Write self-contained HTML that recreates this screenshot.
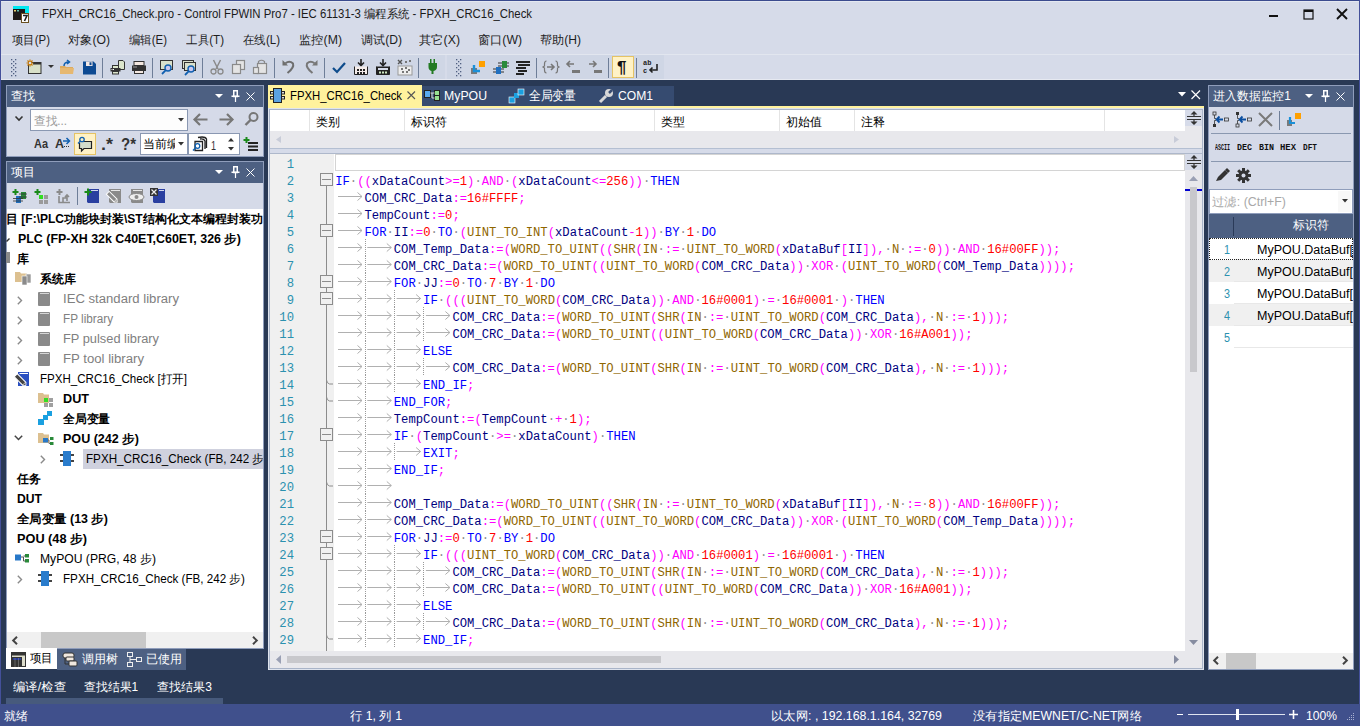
<!DOCTYPE html>
<html><head><meta charset="utf-8">
<style>
*{box-sizing:border-box;margin:0;padding:0}
html,body{width:1360px;height:726px;overflow:hidden}
body{background:#293955;font-family:"Liberation Sans",sans-serif;font-size:12px;color:#000;position:relative}
.a{position:absolute}
.t{position:absolute;white-space:pre;line-height:1;transform-origin:0 0}
.c{position:absolute;left:336px;white-space:pre;font-family:"Liberation Mono",monospace;font-size:12.21px;line-height:17px;color:#000080}
.k{color:#0000ff}.o{color:#ff00ff}.n{color:#ff0000}.f{color:#8f6600}.w{color:#8c8c8c}
.ln{position:absolute;width:40px;left:254px;text-align:right;font-family:"Liberation Mono",monospace;font-size:12.22px;line-height:17px;color:#2b91af}
svg{position:absolute;overflow:visible}
</style></head><body>

<div class="a" style="left:0px;top:0px;width:1360px;height:80px;background:#d6dbe9;"></div>
<div class="a" style="left:0px;top:0px;width:1360px;height:1px;background:#3b4b8e;"></div>
<div class="a" style="left:0px;top:0px;width:1px;height:726px;background:#44509a;"></div>
<div class="a" style="left:1359px;top:0px;width:1px;height:726px;background:#44509a;"></div>
<div class="a" style="left:1px;top:1px;width:1358px;height:1px;background:#e4e8f1;"></div>
<svg style="left:12px;top:5px" width="18" height="18" viewBox="0 0 18 18"><path d="M1 1 H17 V8 H13 V4 H1 Z" fill="#00e8f0"/><path d="M1 4 H13 V15 H1 Z" fill="#1e1a1a"/><rect x="2" y="5" width="2" height="1.5" fill="#e8d070"/><rect x="5" y="5" width="2" height="1.5" fill="#60c0b0"/><rect x="9.5" y="8.5" width="7" height="9" fill="#fff" stroke="#6a5020"/><path d="M11 10.5 H15 L12.5 16" stroke="#222" stroke-width="1.6" fill="none"/></svg>
<div class="t" style="left:42px;top:8px;color:#1a1a1a;transform:scaleX(0.9473);">FPXH_CRC16_Check.pro - Control FPWIN Pro7 - IEC 61131-3 编程系统 - FPXH_CRC16_Check</div>
<div class="a" style="left:1269px;top:15px;width:9px;height:2px;background:#111;"></div>
<svg style="left:1303px;top:9px" width="12" height="12" viewBox="0 0 12 12"><rect x="1" y="1" width="9" height="9" fill="none" stroke="#111" stroke-width="1.2"/><rect x="1" y="1" width="9" height="2" fill="#111"/></svg>
<svg style="left:1336px;top:8px" width="12" height="12" viewBox="0 0 12 12"><path d="M1 1 L11 11 M11 1 L1 11" stroke="#111" stroke-width="1.9"/></svg>
<div class="t" style="left:12px;top:34px;color:#1e1e1e;transform:scaleX(0.9500);">项目(P)</div>
<div class="t" style="left:68px;top:34px;color:#1e1e1e;transform:scaleX(1.0163);">对象(O)</div>
<div class="t" style="left:129px;top:34px;color:#1e1e1e;transform:scaleX(0.9500);">编辑(E)</div>
<div class="t" style="left:186px;top:34px;color:#1e1e1e;transform:scaleX(0.9662);">工具(T)</div>
<div class="t" style="left:243px;top:34px;color:#1e1e1e;transform:scaleX(0.9568);">在线(L)</div>
<div class="t" style="left:299px;top:34px;color:#1e1e1e;transform:scaleX(1.0238);">监控(M)</div>
<div class="t" style="left:361px;top:34px;color:#1e1e1e;transform:scaleX(1.0081);">调试(D)</div>
<div class="t" style="left:419px;top:34px;color:#1e1e1e;transform:scaleX(1.0250);">其它(X)</div>
<div class="t" style="left:478px;top:34px;color:#1e1e1e;transform:scaleX(1.0155);">窗口(W)</div>
<div class="t" style="left:540px;top:34px;color:#1e1e1e;transform:scaleX(1.0081);">帮助(H)</div>
<div class="a" style="left:1px;top:54px;width:1358px;height:1px;background:#e2e6ef;"></div>
<div class="a" style="left:2px;top:55px;width:443px;height:24px;background:#cfd6e5;"></div>
<div class="a" style="left:447px;top:55px;width:217px;height:24px;background:#cfd6e5;"></div>
<div class="a" style="left:1px;top:79px;width:1358px;height:1px;background:#e6e9f1;"></div>
<svg style="left:11px;top:59px" width="6" height="18" fill="#4f5f80"><rect x="0" y="0" width="1.3" height="1.3"/><rect x="4" y="0" width="1.3" height="1.3"/><rect x="2" y="2" width="1.3" height="1.3"/><rect x="0" y="4" width="1.3" height="1.3"/><rect x="4" y="4" width="1.3" height="1.3"/><rect x="2" y="6" width="1.3" height="1.3"/><rect x="0" y="8" width="1.3" height="1.3"/><rect x="4" y="8" width="1.3" height="1.3"/><rect x="2" y="10" width="1.3" height="1.3"/><rect x="0" y="12" width="1.3" height="1.3"/><rect x="4" y="12" width="1.3" height="1.3"/><rect x="2" y="14" width="1.3" height="1.3"/><rect x="0" y="16" width="1.3" height="1.3"/><rect x="4" y="16" width="1.3" height="1.3"/></svg>
<svg style="left:456px;top:59px" width="6" height="18" fill="#4f5f80"><rect x="0" y="0" width="1.3" height="1.3"/><rect x="4" y="0" width="1.3" height="1.3"/><rect x="2" y="2" width="1.3" height="1.3"/><rect x="0" y="4" width="1.3" height="1.3"/><rect x="4" y="4" width="1.3" height="1.3"/><rect x="2" y="6" width="1.3" height="1.3"/><rect x="0" y="8" width="1.3" height="1.3"/><rect x="4" y="8" width="1.3" height="1.3"/><rect x="2" y="10" width="1.3" height="1.3"/><rect x="0" y="12" width="1.3" height="1.3"/><rect x="4" y="12" width="1.3" height="1.3"/><rect x="2" y="14" width="1.3" height="1.3"/><rect x="0" y="16" width="1.3" height="1.3"/><rect x="4" y="16" width="1.3" height="1.3"/></svg>
<svg style="left:26px;top:59px" width="16" height="16" viewBox="0 0 16 16"><rect x="2.5" y="3.5" width="12.5" height="11" fill="#d8e0c8" stroke="#333"/><rect x="7" y="3" width="8" height="2.5" fill="#333"/><path d="M4 0.5 V7.5 M0.5 4 H7.5 M1.5 1.5 L6.5 6.5 M6.5 1.5 L1.5 6.5" stroke="#c87800" stroke-width="1.2"/><circle cx="4" cy="4" r="1.3" fill="#d6dbe9"/></svg>
<svg style="left:47px;top:64px" width="8" height="6" viewBox="0 0 8 6"><path d="M1 1 H7 L4 4 Z" fill="#333"/></svg>
<svg style="left:59px;top:60px" width="16" height="16" viewBox="0 0 16 16"><path d="M1 6 H6 L7 7 H14 V14 H1 Z" fill="#dcab60"/><path d="M1 8 H15 L14 14 H1 Z" fill="#e6b870"/><path d="M5 6 C5 3 7 2 10 2 M8 0 L10.5 2 L8 4" stroke="#1060b0" stroke-width="1.5" fill="none"/></svg>
<svg style="left:82px;top:60px" width="16" height="16" viewBox="0 0 16 16"><path d="M1 1.5 H11.5 L14 4 V14.5 H1 Z" fill="#0d4a92"/><rect x="4" y="1.5" width="6.5" height="4.5" fill="#f4e8e4"/><rect x="7.5" y="2.3" width="2" height="2.8" fill="#0d4a92"/></svg>
<div class="a" style="left:102px;top:58px;width:1px;height:20px;background:#6e7e98;"></div>
<svg style="left:110px;top:59px" width="16" height="16" viewBox="0 0 16 16"><path d="M8.5 1.5 H13 L14.5 3 V10.5 H8.5 Z" fill="#dce6cc" stroke="#333"/><rect x="2.5" y="6.5" width="6" height="3" fill="#dce6cc" stroke="#333"/><rect x="0.5" y="9" width="10" height="3.5" fill="#333"/><rect x="1.5" y="10" width="1" height="1" fill="#fff"/><rect x="3" y="10" width="1" height="1" fill="#fff"/><rect x="2.5" y="12.5" width="6" height="2.5" fill="#dce6cc" stroke="#333"/></svg>
<svg style="left:131px;top:60px" width="16" height="16" viewBox="0 0 16 16"><rect x="3" y="1.5" width="10" height="4" fill="#f4e8e0" stroke="#333"/><rect x="1" y="5.5" width="14" height="5.5" fill="#333"/><rect x="2.5" y="6.5" width="1" height="1" fill="#fff"/><rect x="4.5" y="6.5" width="1" height="1" fill="#fff"/><rect x="3.5" y="10.5" width="9" height="3" fill="#f4e8e0" stroke="#333"/></svg>
<div class="a" style="left:152px;top:58px;width:1px;height:20px;background:#6e7e98;"></div>
<svg style="left:159px;top:59px" width="16" height="16" viewBox="0 0 16 16"><rect x="1.5" y="1.5" width="12" height="9" fill="#d8e0cc" stroke="#333"/><circle cx="9" cy="9" r="3" fill="#c8c8f0" stroke="#1060b0" stroke-width="1.4"/><path d="M6.8 11.2 L3 15" stroke="#1060b0" stroke-width="1.8"/></svg>
<svg style="left:181px;top:59px" width="16" height="16" viewBox="0 0 16 16"><rect x="1.5" y="1.5" width="11" height="8" fill="#d8e0cc" stroke="#333"/><rect x="3.5" y="3.5" width="11" height="8" fill="#d8e0cc" stroke="#333"/><circle cx="10" cy="10" r="3" fill="#c8c8f0" stroke="#1060b0" stroke-width="1.4"/><path d="M7.8 12.2 L4 16" stroke="#1060b0" stroke-width="1.8"/></svg>
<div class="a" style="left:202px;top:58px;width:1px;height:20px;background:#6e7e98;"></div>
<svg style="left:209px;top:59px" width="16" height="16" viewBox="0 0 16 16"><path d="M4.5 1 L9 10 M11.5 1 L7 10" stroke="#8a8a8a" stroke-width="1.5"/><circle cx="4.5" cy="12.5" r="2.5" fill="none" stroke="#8a8a8a" stroke-width="1.3"/><circle cx="11.5" cy="12.5" r="2.5" fill="none" stroke="#8a8a8a" stroke-width="1.3"/></svg>
<svg style="left:231px;top:59px" width="16" height="16" viewBox="0 0 16 16"><rect x="5.5" y="1.5" width="8" height="9" fill="#e4e4e4" stroke="#8a8a8a" stroke-width="1.2"/><rect x="1.5" y="5.5" width="8" height="9" fill="#e4e4e4" stroke="#8a8a8a" stroke-width="1.2"/></svg>
<svg style="left:252px;top:59px" width="16" height="16" viewBox="0 0 16 16"><rect x="5.5" y="4.5" width="9" height="10" fill="#e4e4e4" stroke="#8a8a8a" stroke-width="1.2"/><path d="M6.5 4.5 V2.5 Q9.5 0 12.5 2.5 V4.5" fill="none" stroke="#8a8a8a" stroke-width="1.2"/><rect x="1.5" y="8.5" width="5" height="6" fill="#e4e4e4" stroke="#8a8a8a" stroke-width="1.2"/></svg>
<div class="a" style="left:274px;top:58px;width:1px;height:20px;background:#6e7e98;"></div>
<svg style="left:281px;top:59px" width="16" height="16" viewBox="0 0 16 16"><path d="M1.5 1 V6.5 H7 Z" fill="#6e6e6e"/><path d="M4.5 4.2 Q8.5 1 12 4.5 Q13.5 8.5 6.5 14" stroke="#6e6e6e" stroke-width="2" fill="none"/></svg>
<svg style="left:303px;top:59px" width="16" height="16" viewBox="0 0 16 16"><path d="M14.5 1 V6.5 H9 Z" fill="#777"/><path d="M11.5 4.2 Q7.5 1 4 4.5 Q2.5 8.5 9.5 14" stroke="#777" stroke-width="2" fill="none"/></svg>
<div class="a" style="left:324px;top:58px;width:1px;height:20px;background:#6e7e98;"></div>
<svg style="left:331px;top:59px" width="16" height="16" viewBox="0 0 16 16"><path d="M2 9 L6 13 L14 4" stroke="#0e4c8c" stroke-width="2.2" fill="none"/></svg>
<svg style="left:353px;top:59px" width="16" height="16" viewBox="0 0 16 16"><path d="M8 0 V6 M5 3.5 L8 6.5 L11 3.5" stroke="#222" stroke-width="1.6" fill="none"/><path d="M1.5 7.5 V15.5 H14.5 V7.5" fill="#f4ecea" stroke="#222"/><rect x="4" y="10" width="2" height="2" fill="#222"/><rect x="7" y="10" width="2" height="2" fill="#222"/><rect x="10" y="10" width="2" height="2" fill="#222"/><rect x="4" y="13" width="2" height="2" fill="#222"/><rect x="7" y="13" width="2" height="2" fill="#222"/><rect x="10" y="13" width="2" height="2" fill="#222"/></svg>
<svg style="left:375px;top:59px" width="16" height="16" viewBox="0 0 16 16"><path d="M8 0 V6 M5 3.5 L8 6.5 L11 3.5" stroke="#222" stroke-width="1.6" fill="none"/><path d="M1.5 7.5 V15.5 H14.5 V7.5" fill="#222" stroke="#222"/><rect x="3" y="9" width="10" height="2" fill="#d6dbe9"/><rect x="4" y="12.5" width="2" height="2" fill="#cde8c0"/><rect x="7" y="12.5" width="2" height="2" fill="#cde8c0"/><rect x="10" y="12.5" width="2" height="2" fill="#cde8c0"/></svg>
<svg style="left:397px;top:59px" width="16" height="16" viewBox="0 0 16 16"><rect x="1" y="7" width="14" height="9" fill="#eee" stroke="#999"/><path d="M1 1 L5 5 M5 1 L1 5" stroke="#555" stroke-width="1.4"/><g fill="#777"><rect x="8" y="2" width="2" height="2"/><rect x="12" y="1" width="2" height="2"/><rect x="4" y="9" width="2" height="2"/><rect x="8" y="8" width="2" height="2"/><rect x="11" y="10" width="2" height="2"/><rect x="5" y="12" width="2" height="2"/><rect x="9" y="12" width="2" height="2"/></g></svg>
<div class="a" style="left:418px;top:58px;width:1px;height:20px;background:#6e7e98;"></div>
<svg style="left:428px;top:59px" width="10" height="16" viewBox="0 0 10 16"><rect x="2" y="0" width="1.5" height="4" fill="#237a23"/><rect x="5.5" y="0" width="1.5" height="4" fill="#237a23"/><path d="M0.5 4 H9 V8 Q9 11 5.5 12 V15 H3.5 V12 Q0.5 11 0.5 8 Z" fill="#237a23"/></svg>
<svg style="left:470px;top:60px" width="16" height="16" viewBox="0 0 16 16"><rect x="1" y="8" width="6" height="6" fill="#7a7a7a"/><path d="M4 5 V11 H10" stroke="#1a90d8" stroke-width="2.4" fill="none"/><rect x="9" y="1" width="6" height="6" fill="#ffa000"/></svg>
<svg style="left:493px;top:59px" width="16" height="16" viewBox="0 0 16 16"><g stroke="#333" stroke-width="1"><path d="M0 10 H11 M0 13 H11 M5 4 H16 M5 7 H16"/></g><rect x="3" y="8" width="5" height="7" fill="#1f6fc0"/><rect x="9" y="2" width="5" height="7" fill="#2a8a3a"/></svg>
<svg style="left:515px;top:60px" width="16" height="16" viewBox="0 0 16 16"><g fill="#222"><rect x="1" y="1" width="14" height="2"/><rect x="3" y="4" width="12" height="2"/><rect x="1" y="7" width="10" height="2"/><rect x="3" y="10" width="9" height="2"/><rect x="1" y="13" width="8" height="2"/></g></svg>
<div class="a" style="left:536px;top:58px;width:1px;height:20px;background:#6e7e98;"></div>
<svg style="left:543px;top:59px" width="16" height="16" viewBox="0 0 16 16"><path d="M3.5 2 Q1.5 2 1.5 5 V7 L0 8 L1.5 9 V11 Q1.5 14 3.5 14 M12.5 2 Q14.5 2 14.5 5 V7 L16 8 L14.5 9 V11 Q14.5 14 12.5 14" stroke="#777" stroke-width="1.2" fill="none"/><path d="M4 8 H11 M8 5 L11 8 L8 11" stroke="#777" stroke-width="1.6" fill="none"/></svg>
<svg style="left:566px;top:59px" width="14" height="16" viewBox="0 0 14 16"><path d="M1 5 H8 M4 2 L1 5 L4 8" stroke="#777" stroke-width="1.6" fill="none"/><rect x="6" y="11" width="8" height="3" fill="#777"/></svg>
<svg style="left:588px;top:59px" width="14" height="16" viewBox="0 0 14 16"><path d="M1 5 H8 M5 2 L8 5 L5 8" stroke="#777" stroke-width="1.6" fill="none"/><rect x="6" y="11" width="8" height="3" fill="#777"/></svg>
<div class="a" style="left:608px;top:58px;width:1px;height:20px;background:#6e7e98;"></div>
<div class="a" style="left:612px;top:56px;width:22px;height:22px;background:#e5c365;"></div>
<div class="a" style="left:613px;top:57px;width:20px;height:20px;background:#fff2c6;"></div>
<div class="t" style="left:617px;top:59px;font-size:17px;font-weight:bold;color:#111">¶</div>
<div class="a" style="left:636px;top:58px;width:1px;height:20px;background:#6e7e98;"></div>
<svg style="left:643px;top:59px" width="16" height="16" viewBox="0 0 16 16"><text x="0" y="6" font-size="7" font-family="Liberation Mono" font-weight="bold" fill="#222">ab</text><text x="0" y="14" font-size="7" font-family="Liberation Mono" font-weight="bold" fill="#222">c</text><path d="M14 5 V11 H7 M9.5 8.5 L7 11 L9.5 13.5" stroke="#222" stroke-width="1.6" fill="none"/></svg>
<div class="a" style="left:6px;top:85px;width:258px;height:72px;background:#8f9dbb;"></div>
<div class="a" style="left:7px;top:86px;width:256px;height:21px;background:#4d6082;"></div>
<div class="t" style="left:11px;top:90px;color:#fff;">查找</div>
<svg style="left:215px;top:94px" width="8" height="5" viewBox="0 0 8 5"><path d="M0 0 H8 L4 4 Z" fill="#fff"/></svg>
<svg style="left:231px;top:90px" width="9" height="12" viewBox="0 0 9 12"><path d="M2.75 0.75 H6.25 V6.5 H2.75 Z" fill="none" stroke="#fff" stroke-width="1.5"/><path d="M0.5 6.25 H8.5" stroke="#fff" stroke-width="1.5"/><path d="M4.5 7 V12" stroke="#fff" stroke-width="1.2"/></svg>
<svg style="left:246px;top:92px" width="9" height="9" viewBox="0 0 9 9"><path d="M0.5 0.5 L8.5 8.5 M8.5 0.5 L0.5 8.5" stroke="#fff" stroke-width="1"/></svg>
<div class="a" style="left:7px;top:107px;width:256px;height:49px;background:#d5dae8;"></div>
<svg style="left:15px;top:116px" width="9" height="6" viewBox="0 0 9 6"><path d="M0.5 0.5 L4 4 L7.5 0.5" stroke="#333" stroke-width="1.6" fill="none"/></svg>
<div class="a" style="left:30px;top:109px;width:158px;height:22px;background:#8a98b2;"></div>
<div class="a" style="left:31px;top:110px;width:156px;height:20px;background:#fdfdfd;"></div>
<div class="t" style="left:34px;top:115px;color:#9a9a9a;transform:scaleX(0.9701);">查找...</div>
<svg style="left:178px;top:118px" width="6" height="4" viewBox="0 0 6 4"><path d="M0 0 H6 L3 3.5 Z" fill="#333"/></svg>
<svg style="left:193px;top:113px" width="15" height="13" viewBox="0 0 15 13"><path d="M14.5 6.5 H2 M7 1 L1.5 6.5 L7 12" stroke="#777" stroke-width="2.2" fill="none"/></svg>
<svg style="left:219px;top:113px" width="15" height="13" viewBox="0 0 15 13"><path d="M0.5 6.5 H13 M8 1 L13.5 6.5 L8 12" stroke="#777" stroke-width="2.2" fill="none"/></svg>
<svg style="left:244px;top:112px" width="15" height="15" viewBox="0 0 15 15"><circle cx="9.5" cy="5" r="4" fill="none" stroke="#777" stroke-width="2"/><path d="M6.5 8 L1.5 13" stroke="#777" stroke-width="2.4"/></svg>
<div class="t" style="left:34px;top:137px;color:#333;font-weight:bold;font-size:13px;transform:scaleX(0.8421);">Aa</div>
<div class="t" style="left:55px;top:137px;color:#333;font-weight:bold;font-size:13px;transform:scaleX(0.9584);">A</div>
<svg style="left:63px;top:137px" width="8" height="10" viewBox="0 0 8 10"><path d="M0 4 H6 M3.5 1 L6.5 4 L3.5 7" stroke="#1060b0" stroke-width="1.5" fill="none"/><rect x="1" y="9" width="1" height="1" fill="#333"/><rect x="3" y="9" width="1" height="1" fill="#333"/><rect x="5" y="9" width="1" height="1" fill="#333"/></svg>
<div class="a" style="left:74px;top:133px;width:22px;height:22px;background:#e5c365;"></div>
<div class="a" style="left:75px;top:134px;width:20px;height:20px;background:#fff2c6;"></div>
<svg style="left:77px;top:136px" width="16" height="16" viewBox="0 0 16 16"><path d="M4.5 5.5 H14.5 V12.5 H7 L4.5 15 V12.5 H2.5 V7" fill="#d3dccb" stroke="#222" stroke-width="1.2"/><circle cx="5" cy="3.5" r="2.2" fill="none" stroke="#1060b0" stroke-width="1.3"/><path d="M3.5 5 L1 7.5" stroke="#1060b0" stroke-width="1.4"/></svg>
<div class="t" style="left:101px;top:137px;color:#333;font-weight:bold;font-size:16px;transform:scaleX(1.1245);">.*</div>
<div class="t" style="left:121px;top:137px;color:#333;font-weight:bold;font-size:16px;transform:scaleX(0.9375);">?*</div>
<div class="a" style="left:140px;top:133px;width:48px;height:22px;background:#8a98b2;"></div>
<div class="a" style="left:141px;top:134px;width:46px;height:20px;background:#fff;"></div>
<div class="a" style="left:141px;top:134px;width:34px;height:20px;overflow:hidden"><div class="t" style="left:2px;top:4px;color:#000;font-size:12px">当前编</div></div>
<svg style="left:178px;top:142px" width="6" height="4" viewBox="0 0 6 4"><path d="M0 0 H6 L3 3.5 Z" fill="#333"/></svg>
<div class="a" style="left:188px;top:133px;width:52px;height:22px;background:#8a98b2;"></div>
<div class="a" style="left:189px;top:134px;width:50px;height:20px;background:#fff;"></div>
<svg style="left:192px;top:136px" width="16" height="16" viewBox="0 0 16 16"><path d="M6 1.5 Q13 0 14.5 3 V12 M8 3 Q12 2.5 13 5 V13 M3 5.5 H10.5 V14.5 H3 Z" stroke="#222" stroke-width="1.3" fill="none"/><circle cx="5.5" cy="10" r="2.3" fill="none" stroke="#1060b0" stroke-width="1.3"/><path d="M4 11.5 L1 14.5" stroke="#1060b0" stroke-width="1.5"/></svg>
<div class="t" style="left:211px;top:139px;color:#333;font-size:13px;transform:scaleX(0.6911);">1</div>
<svg style="left:228px;top:138px" width="6" height="13" viewBox="0 0 6 13"><path d="M0 3.5 L3 0 L6 3.5 Z M0 9 L3 12.5 L6 9 Z" fill="#333"/></svg>
<svg style="left:243px;top:137px" width="15" height="14" viewBox="0 0 15 14"><path d="M0.5 3 H6.5 M3.5 0 V6" stroke="#1a8a1a" stroke-width="2"/><rect x="5" y="5" width="10" height="2" fill="#222"/><rect x="5" y="8.5" width="10" height="2" fill="#222"/><rect x="5" y="12" width="10" height="2" fill="#222"/></svg>
<div class="a" style="left:6px;top:161px;width:258px;height:509px;background:#8f9dbb;"></div>
<div class="a" style="left:7px;top:162px;width:256px;height:21px;background:#4d6082;"></div>
<div class="t" style="left:11px;top:166px;color:#fff;">项目</div>
<svg style="left:215px;top:170px" width="8" height="5" viewBox="0 0 8 5"><path d="M0 0 H8 L4 4 Z" fill="#fff"/></svg>
<svg style="left:231px;top:166px" width="9" height="12" viewBox="0 0 9 12"><path d="M2.75 0.75 H6.25 V6.5 H2.75 Z" fill="none" stroke="#fff" stroke-width="1.5"/><path d="M0.5 6.25 H8.5" stroke="#fff" stroke-width="1.5"/><path d="M4.5 7 V12" stroke="#fff" stroke-width="1.2"/></svg>
<svg style="left:246px;top:168px" width="9" height="9" viewBox="0 0 9 9"><path d="M0.5 0.5 L8.5 8.5 M8.5 0.5 L0.5 8.5" stroke="#fff" stroke-width="1"/></svg>
<div class="a" style="left:7px;top:183px;width:256px;height:26px;background:#d5dae8;"></div>
<div class="a" style="left:7px;top:209px;width:256px;height:423px;background:#ffffff;"></div>
<svg style="left:12px;top:188px" width="16" height="16" viewBox="0 0 16 16"><path d="M0.5 4 H6.5 M3.5 1 V7" stroke="#1a8a1a" stroke-width="2"/><rect x="4" y="8" width="5" height="7" fill="#1f6fc0"/><rect x="9" y="4" width="5" height="7" fill="#2a8a3a"/><path d="M1 10.5 H11 M1 13 H11 M7 6 H15 M7 9 H15" stroke="#333" stroke-width="0.8"/></svg>
<svg style="left:34px;top:188px" width="16" height="16" viewBox="0 0 16 16"><path d="M0.5 4 H6.5 M3.5 1 V7" stroke="#1a8a1a" stroke-width="2"/><rect x="5" y="7" width="4" height="4" fill="#33dd22"/><rect x="10" y="7" width="4" height="4" fill="#9a9a9a"/><rect x="5" y="12" width="4" height="4" fill="#9a9a9a"/><rect x="10" y="12" width="4" height="4" fill="#9a9a9a"/></svg>
<svg style="left:56px;top:188px" width="16" height="16" viewBox="0 0 16 16"><path d="M0.5 4 H6.5 M3.5 1 V7" stroke="#8a8a8a" stroke-width="2"/><path d="M3 8 V14.5 H14 M7 14 V10 H11 M11 7 V13 M9 9 L11 7 L13 9" stroke="#8a8a8a" stroke-width="1.6" fill="none"/></svg>
<div class="a" style="left:77px;top:187px;width:1px;height:18px;background:#6e7e98;"></div>
<svg style="left:84px;top:188px" width="16" height="16" viewBox="0 0 16 16"><path d="M3 1 H15 V15 H4 L3 14 Z" fill="#2a3fa0"/><path d="M7 2.5 H14" stroke="#fff" stroke-width="0.8"/><path d="M0.5 4 H7.5 M4 0.5 V7.5" stroke="#1a8a1a" stroke-width="2"/></svg>
<svg style="left:106px;top:188px" width="16" height="16" viewBox="0 0 16 16"><path d="M3 1 H15 V15 H4 L3 14 Z" fill="#8a8a8a"/><path d="M5 2.5 H14" stroke="#fff" stroke-width="0.8"/><g transform="rotate(45 6 9)"><rect x="0" y="7" width="11" height="4" fill="#8a8a8a" stroke="#fff" stroke-width="1"/><path d="M11 7 L13.5 9 L11 11" fill="#8a8a8a" stroke="#fff" stroke-width="0.8"/></g></svg>
<svg style="left:128px;top:188px" width="16" height="16" viewBox="0 0 16 16"><path d="M3 1 H15 V15 H4 L3 14 Z" fill="#8a8a8a"/><path d="M5 2.5 H14" stroke="#fff" stroke-width="0.8"/><ellipse cx="8.5" cy="9" rx="7.5" ry="3.5" fill="#eee" stroke="#8a8a8a"/><circle cx="8.5" cy="9" r="2" fill="#8a8a8a"/></svg>
<svg style="left:150px;top:188px" width="16" height="16" viewBox="0 0 16 16"><path d="M3 1 H15 V15 H4 L3 14 Z" fill="#2a3fa0"/><path d="M9 2.5 H14" stroke="#fff" stroke-width="0.8"/><rect x="0" y="0" width="8" height="8" fill="#333"/><path d="M1.5 1.5 L6.5 6.5 M6.5 1.5 L1.5 6.5" stroke="#eee" stroke-width="1.2"/></svg>
<div class="a" style="left:0;top:0;width:263px;height:726px;overflow:hidden">
<div class="t" style="left:6px;top:213px;color:#000;font-weight:bold;">目 [F:\PLC功能块封装\ST结构化文本编程封装功</div>
<svg style="left:6px;top:232px" width="5" height="11" viewBox="0 0 5 11"><path d="M0 9 L3 6 L4 7 L1 10 Z" fill="#333"/></svg>
<div class="t" style="left:18px;top:233px;color:#000;font-weight:bold;transform:scaleX(1.0352);">PLC (FP-XH 32k C40ET,C60ET, 326 步)</div>
<div class="a" style="left:6px;top:252px;width:4px;height:11px;background:#8a8a8a;"></div>
<div class="t" style="left:17px;top:253px;color:#000;font-weight:bold;">库</div>
<svg style="left:15px;top:272px" width="18" height="14" viewBox="0 0 18 14"><path d="M0 0 H5 L6 1.5 H12 V10 H0 Z" fill="#dcc090"/><rect x="11" y="2" width="5" height="9" fill="#9a9a9a" stroke="#fff" stroke-width="0.6"/><rect x="7" y="4" width="5" height="9" fill="#8a8a8a" stroke="#fff" stroke-width="0.6"/></svg>
<div class="t" style="left:40px;top:273px;color:#000;font-weight:bold;">系统库</div>
<svg style="left:17px;top:296px" width="6" height="9" viewBox="0 0 6 9"><path d="M0.8 0.8 L4.5 4.5 L0.8 8.2" stroke="#8a8a8a" stroke-width="1.4" fill="none"/></svg>
<svg style="left:38px;top:292px" width="12" height="14" viewBox="0 0 12 14"><rect x="0" y="0" width="12" height="14" rx="1" fill="#8a8a8a"/><path d="M2 1.5 H11" stroke="#e8e8e8" stroke-width="0.8"/></svg>
<div class="t" style="left:63px;top:293px;color:#808080;transform:scaleX(1.0939);">IEC standard library</div>
<svg style="left:17px;top:316px" width="6" height="9" viewBox="0 0 6 9"><path d="M0.8 0.8 L4.5 4.5 L0.8 8.2" stroke="#8a8a8a" stroke-width="1.4" fill="none"/></svg>
<svg style="left:38px;top:312px" width="12" height="14" viewBox="0 0 12 14"><rect x="0" y="0" width="12" height="14" rx="1" fill="#8a8a8a"/><path d="M2 1.5 H11" stroke="#e8e8e8" stroke-width="0.8"/></svg>
<div class="t" style="left:63px;top:313px;color:#808080;transform:scaleX(0.9780);">FP library</div>
<svg style="left:17px;top:336px" width="6" height="9" viewBox="0 0 6 9"><path d="M0.8 0.8 L4.5 4.5 L0.8 8.2" stroke="#8a8a8a" stroke-width="1.4" fill="none"/></svg>
<svg style="left:38px;top:332px" width="12" height="14" viewBox="0 0 12 14"><rect x="0" y="0" width="12" height="14" rx="1" fill="#8a8a8a"/><path d="M2 1.5 H11" stroke="#e8e8e8" stroke-width="0.8"/></svg>
<div class="t" style="left:63px;top:333px;color:#808080;transform:scaleX(1.0687);">FP pulsed library</div>
<svg style="left:17px;top:356px" width="6" height="9" viewBox="0 0 6 9"><path d="M0.8 0.8 L4.5 4.5 L0.8 8.2" stroke="#8a8a8a" stroke-width="1.4" fill="none"/></svg>
<svg style="left:38px;top:352px" width="12" height="14" viewBox="0 0 12 14"><rect x="0" y="0" width="12" height="14" rx="1" fill="#8a8a8a"/><path d="M2 1.5 H11" stroke="#e8e8e8" stroke-width="0.8"/></svg>
<div class="t" style="left:63px;top:353px;color:#808080;transform:scaleX(1.0974);">FP tool library</div>
<svg style="left:14px;top:370px" width="17" height="18" viewBox="0 0 17 18"><path d="M4 2 H15 V16 H4 Z" fill="#2a4fc0"/><path d="M5.5 3.5 H14" stroke="#fff" stroke-width="1"/><g transform="rotate(45 6 9.5)"><rect x="0" y="7.3" width="12" height="4.4" fill="#444" stroke="#fff" stroke-width="1"/><path d="M12 7.3 L14.5 9.5 L12 11.7" fill="#444" stroke="#fff" stroke-width="0.8"/></g></svg>
<div class="t" style="left:40px;top:373px;color:#000;transform:scaleX(0.9626);">FPXH_CRC16_Check [打开]</div>
<svg style="left:38px;top:392px" width="18" height="14" viewBox="0 0 18 14"><path d="M0 1 H5 L6 2.5 H11 V11 H0 Z" fill="#dcc090"/><rect x="6" y="6" width="4" height="4" fill="#33dd22"/><rect x="11" y="6" width="4" height="4" fill="#a0a0a0"/><rect x="6" y="11" width="4" height="4" fill="#a0a0a0"/><rect x="11" y="11" width="4" height="4" fill="#a0a0a0"/></svg>
<div class="t" style="left:63px;top:393px;color:#000;font-weight:bold;transform:scaleX(1.0538);">DUT</div>
<svg style="left:38px;top:411px" width="14" height="14" viewBox="0 0 14 14"><rect x="0" y="8" width="6" height="6" fill="#1aa0e0"/><rect x="5" y="4" width="5" height="5" fill="#1aa0e0"/><rect x="9" y="0" width="5" height="5" fill="#1aa0e0"/></svg>
<div class="t" style="left:63px;top:413px;color:#000;font-weight:bold;transform:scaleX(0.9792);">全局变量</div>
<svg style="left:14px;top:435px" width="9" height="6" viewBox="0 0 9 6"><path d="M0.8 0.8 L4.5 4.5 L8.2 0.8" stroke="#444" stroke-width="1.5" fill="none"/></svg>
<svg style="left:38px;top:432px" width="18" height="14" viewBox="0 0 18 14"><path d="M0 1 H5 L6 2.5 H11 V11 H0 Z" fill="#dcc090"/><rect x="5" y="6" width="5" height="4.5" fill="#2878c8"/><rect x="12" y="5" width="3.5" height="3" fill="#2a8a3a"/><rect x="12" y="10" width="3.5" height="3" fill="#2a8a3a"/><path d="M10 8 H11 V11.5 H12" stroke="#555" stroke-width="0.8" fill="none"/></svg>
<div class="t" style="left:63px;top:433px;color:#000;font-weight:bold;transform:scaleX(1.0456);">POU (242 步)</div>
<div class="a" style="left:83px;top:449px;width:180px;height:20px;background:#cfd1de;"></div>
<svg style="left:40px;top:455px" width="6" height="9" viewBox="0 0 6 9"><path d="M0.8 0.8 L4.5 4.5 L0.8 8.2" stroke="#8a8a8a" stroke-width="1.4" fill="none"/></svg>
<svg style="left:60px;top:451px" width="14" height="15" viewBox="0 0 14 15"><rect x="3" y="0" width="8" height="15" fill="#2a7ccc"/><rect x="0" y="3" width="3" height="2" fill="#444"/><rect x="0" y="9" width="3" height="2" fill="#444"/><rect x="11" y="3" width="3" height="2" fill="#444"/><rect x="11" y="9" width="3" height="2" fill="#444"/></svg>
<div class="t" style="left:86px;top:453px;color:#000;transform:scaleX(0.9712);">FPXH_CRC16_Check (FB, 242 步)</div>
<div class="t" style="left:17px;top:473px;color:#000;font-weight:bold;">任务</div>
<div class="t" style="left:17px;top:493px;color:#000;font-weight:bold;transform:scaleX(1.0133);">DUT</div>
<div class="t" style="left:17px;top:513px;color:#000;font-weight:bold;transform:scaleX(1.0339);">全局变量 (13 步)</div>
<div class="t" style="left:17px;top:533px;color:#000;font-weight:bold;transform:scaleX(1.0604);">POU (48 步)</div>
<svg style="left:15px;top:554px" width="14" height="9" viewBox="0 0 14 9"><rect x="0" y="0.5" width="6" height="6" fill="#2878c8"/><rect x="10" y="0" width="4" height="3.5" fill="#2a8a3a"/><rect x="10" y="5" width="4" height="3.5" fill="#2a8a3a"/><path d="M6 3 H8.5 V7 H10 M8.5 2 H10" stroke="#555" stroke-width="1" fill="none"/></svg>
<div class="t" style="left:40px;top:553px;color:#000;transform:scaleX(1.0114);">MyPOU (PRG, 48 步)</div>
<svg style="left:17px;top:575px" width="6" height="9" viewBox="0 0 6 9"><path d="M0.8 0.8 L4.5 4.5 L0.8 8.2" stroke="#8a8a8a" stroke-width="1.4" fill="none"/></svg>
<svg style="left:38px;top:571px" width="14" height="15" viewBox="0 0 14 15"><rect x="3" y="0" width="8" height="15" fill="#2a7ccc"/><rect x="0" y="3" width="3" height="2" fill="#444"/><rect x="0" y="9" width="3" height="2" fill="#444"/><rect x="11" y="3" width="3" height="2" fill="#444"/><rect x="11" y="9" width="3" height="2" fill="#444"/></svg>
<div class="t" style="left:63px;top:573px;color:#000;transform:scaleX(0.9712);">FPXH_CRC16_Check (FB, 242 步)</div>
</div>
<div class="a" style="left:7px;top:632px;width:256px;height:16px;background:#f0f0f0;"></div>
<svg style="left:12px;top:636px" width="6" height="9" viewBox="0 0 6 9"><path d="M5 0.8 L1.2 4.5 L5 8.2" stroke="#444" stroke-width="2" fill="none"/></svg>
<div class="a" style="left:41px;top:632px;width:105px;height:16px;background:#c8c8c8;"></div>
<svg style="left:252px;top:636px" width="6" height="9" viewBox="0 0 6 9"><path d="M1 0.8 L4.8 4.5 L1 8.2" stroke="#444" stroke-width="2" fill="none"/></svg>
<div class="a" style="left:6px;top:649px;width:258px;height:21px;background:#293955;"></div>
<div class="a" style="left:6px;top:648px;width:51px;height:21px;background:#ffffff;"></div>
<div class="a" style="left:57px;top:649px;width:129px;height:21px;background:#4d6082;"></div>
<svg style="left:11px;top:652px" width="15" height="15" viewBox="0 0 15 15"><rect x="0.5" y="0.5" width="14" height="14" fill="#dcdccb" stroke="#333"/><rect x="0.5" y="0.5" width="14" height="3" fill="#333"/><rect x="1" y="5" width="10" height="10" fill="#333"/><path d="M2 7 H10" stroke="#2040e0" stroke-width="1.2"/><path d="M4 6 V15 M7.5 6 V15" stroke="#888" stroke-width="0.6"/></svg>
<div class="t" style="left:30px;top:652px;color:#000;transform:scaleX(0.9583);">项目</div>
<svg style="left:62px;top:652px" width="16" height="15" viewBox="0 0 16 15"><rect x="1" y="1" width="11" height="5" rx="2" fill="#f0e8e0" stroke="#333"/><rect x="4" y="5" width="8" height="4" rx="1" fill="#f0e8e0" stroke="#333"/><rect x="7" y="9" width="8" height="5" rx="1" fill="#f0e8e0" stroke="#333"/><path d="M3 6 V12 H7" stroke="#333" fill="none"/></svg>
<div class="t" style="left:82px;top:653px;color:#fff;">调用树</div>
<svg style="left:127px;top:652px" width="15" height="15" viewBox="0 0 15 15"><rect x="0.5" y="0.5" width="5" height="4" fill="none" stroke="#eee"/><rect x="0.5" y="10.5" width="5" height="4" fill="none" stroke="#eee"/><rect x="9.5" y="5.5" width="5" height="4" fill="none" stroke="#eee"/><path d="M3 4.5 V10.5 M3 7.5 H9.5" stroke="#eee"/></svg>
<div class="t" style="left:146px;top:653px;color:#fff;">已使用</div>
<div class="t" style="left:13px;top:681px;color:#fff;transform:scaleX(1.0323);">编译/检查</div>
<div class="t" style="left:84px;top:681px;color:#fff;transform:scaleX(0.9874);">查找结果1</div>
<div class="t" style="left:157px;top:681px;color:#fff;transform:scaleX(1.0057);">查找结果3</div>
<div class="a" style="left:6px;top:698px;width:217px;height:6px;background:#475a7c;"></div>
<div class="a" style="left:0px;top:704px;width:1360px;height:22px;background:#40508c;"></div>
<div class="t" style="left:4px;top:710px;color:#fff;">就绪</div>
<div class="t" style="left:350px;top:710px;color:#fff;transform:scaleX(1.0259);">行 1, 列 1</div>
<div class="t" style="left:771px;top:710px;color:#fff;transform:scaleX(1.0293);">以太网: , 192.168.1.164, 32769</div>
<div class="t" style="left:973px;top:710px;color:#fff;transform:scaleX(1.0222);">没有指定MEWNET/C-NET网络</div>
<div class="a" style="left:1177px;top:714px;width:6px;height:1px;background:#fff;"></div>
<div class="a" style="left:1188px;top:714px;width:97px;height:1px;background:#e0e4f0;"></div>
<div class="a" style="left:1236px;top:709px;width:3px;height:11px;background:#fff;"></div>
<svg style="left:1289px;top:710px" width="9" height="9" viewBox="0 0 9 9"><path d="M0 4.5 H9 M4.5 0 V9" stroke="#fff" stroke-width="1.6"/></svg>
<div class="t" style="left:1306px;top:710px;color:#fff;transform:scaleX(1.0097);">100%</div>
<svg style="left:1347px;top:713px" width="8" height="8" viewBox="0 0 8 8"><g fill="#a8b0d0"><rect x="6" y="0" width="1" height="1"/><rect x="4" y="2" width="1" height="1"/><rect x="6" y="2" width="1" height="1"/><rect x="2" y="4" width="1" height="1"/><rect x="4" y="4" width="1" height="1"/><rect x="6" y="4" width="1" height="1"/><rect x="0" y="6" width="1" height="1"/><rect x="2" y="6" width="1" height="1"/><rect x="4" y="6" width="1" height="1"/><rect x="6" y="6" width="1" height="1"/></g></svg>
<div class="a" style="left:422px;top:86px;width:252px;height:20px;background:#364b70;"></div>
<div class="a" style="left:268px;top:85px;width:154px;height:21px;background:#fff29d;"></div>
<svg style="left:270px;top:88px" width="15" height="15" viewBox="0 0 15 15"><rect x="0.5" y="3.5" width="14" height="2.5" fill="#ddd" stroke="#222"/><rect x="0.5" y="8.5" width="14" height="2.5" fill="#ddd" stroke="#222"/><rect x="3.5" y="0.5" width="8" height="14" fill="#5aa2e2" stroke="#222"/></svg>
<div class="t" style="left:290px;top:89px;color:#000;font-size:13px;transform:scaleX(0.8709);">FPXH_CRC16_Check</div>
<svg style="left:407px;top:91px" width="9" height="9" viewBox="0 0 9 9"><path d="M0.5 0.5 L8 8 M8 0.5 L0.5 8" stroke="#555" stroke-width="1.1"/></svg>
<svg style="left:424px;top:90px" width="16" height="11" viewBox="0 0 16 11"><rect x="0.5" y="0.5" width="6" height="7" fill="#5aaaee" stroke="#222"/><rect x="10.5" y="0.5" width="5" height="5" fill="#98e090" stroke="#222"/><rect x="10.5" y="5.5" width="5" height="5" fill="#98e090" stroke="#222"/><path d="M6.5 3 H10.5 M8 3 V8 H10.5" stroke="#ddd" stroke-width="1" fill="none"/></svg>
<div class="t" style="left:444px;top:89px;color:#fff;font-size:13px;transform:scaleX(0.9451);">MyPOU</div>
<svg style="left:509px;top:88px" width="16" height="16" viewBox="0 0 16 16"><rect x="0" y="9" width="6" height="6" fill="#1aa0e0" stroke="#fff" stroke-width="0.6"/><rect x="5" y="5" width="5" height="5" fill="#1aa0e0"/><rect x="9" y="1" width="6" height="6" fill="#1aa0e0" stroke="#fff" stroke-width="0.6"/></svg>
<div class="t" style="left:529px;top:89px;color:#fff;font-size:13px;transform:scaleX(0.9038);">全局变量</div>
<svg style="left:598px;top:88px" width="16" height="16" viewBox="0 0 16 16"><path d="M2 14 L8 8" stroke="#d8d8d8" stroke-width="3"/><circle cx="11" cy="5" r="4" fill="#d8d8d8"/><path d="M11 5 L14 2" stroke="#3a4e72" stroke-width="2.5"/></svg>
<div class="t" style="left:618px;top:89px;color:#fff;font-size:13px;transform:scaleX(0.9318);">COM1</div>
<svg style="left:1178px;top:92px" width="8" height="5" viewBox="0 0 8 5"><path d="M0 0 H8 L4 4.5 Z" fill="#fff"/></svg>
<svg style="left:1191px;top:90px" width="10" height="10" viewBox="0 0 10 10"><path d="M0.5 0.5 L9 9 M9 0.5 L0.5 9" stroke="#fff" stroke-width="1.2"/></svg>
<div class="a" style="left:268px;top:106px;width:936px;height:2px;background:#fff29d;"></div>
<div class="a" style="left:268px;top:108px;width:936px;height:562px;background:#dfe4ee;"></div>
<div class="a" style="left:269px;top:109px;width:934px;height:560px;background:#a9b4c8;"></div>
<div class="a" style="left:270px;top:110px;width:932px;height:21px;background:#ffffff;"></div>
<div class="a" style="left:270px;top:148px;width:932px;height:1px;background:#b4bfd2;"></div>
<div class="a" style="left:270px;top:131px;width:932px;height:17px;background:#e8e8ec;"></div>
<div class="a" style="left:309px;top:110px;width:1px;height:21px;background:#e4e4e4;"></div>
<div class="a" style="left:404px;top:110px;width:1px;height:21px;background:#e4e4e4;"></div>
<div class="a" style="left:654px;top:110px;width:1px;height:21px;background:#e4e4e4;"></div>
<div class="a" style="left:779px;top:110px;width:1px;height:21px;background:#e4e4e4;"></div>
<div class="a" style="left:854px;top:110px;width:1px;height:21px;background:#e4e4e4;"></div>
<div class="a" style="left:1104px;top:110px;width:1px;height:21px;background:#e4e4e4;"></div>
<div class="t" style="left:316px;top:116px;color:#000;">类别</div>
<div class="t" style="left:411px;top:116px;color:#000;">标识符</div>
<div class="t" style="left:661px;top:116px;color:#000;">类型</div>
<div class="t" style="left:786px;top:116px;color:#000;">初始值</div>
<div class="t" style="left:861px;top:116px;color:#000;">注释</div>
<div class="a" style="left:1185px;top:110px;width:17px;height:16px;background:#d6dbe9;"></div>
<div class="a" style="left:1185px;top:126px;width:17px;height:22px;background:#e8e8ec;"></div>
<svg style="left:1187px;top:111px" width="14" height="14" viewBox="0 0 14 14"><path d="M7 0 L3.5 3.5 H10.5 Z M7 14 L3.5 10.5 H10.5 Z" fill="#333"/><path d="M0 5.5 H14 M0 8.5 H14 M7 3 V5 M7 9 V11" stroke="#333" stroke-width="1.2"/></svg>
<svg style="left:276px;top:136px" width="5" height="7" viewBox="0 0 5 7"><path d="M5 0 L0 3.5 L5 7 Z" fill="#c8ccd8"/></svg>
<svg style="left:1174px;top:136px" width="5" height="7" viewBox="0 0 5 7"><path d="M0 0 L5 3.5 L0 7 Z" fill="#c8ccd8"/></svg>
<div class="a" style="left:270px;top:149px;width:932px;height:4px;background:#d6dbe9;"></div>
<div class="a" style="left:270px;top:153px;width:932px;height:1px;background:#aeb8cb;"></div>
<div class="a" style="left:270px;top:154px;width:932px;height:514px;background:#ffffff;"></div>
<div class="a" style="left:270px;top:154px;width:64px;height:497px;background:#f0f0f0;"></div>
<div class="a" style="left:270px;top:651px;width:932px;height:17px;background:#e8e8ec;"></div>
<div class="a" style="left:1185px;top:154px;width:17px;height:497px;background:#e8e8ec;"></div>
<div class="a" style="left:1185px;top:154px;width:17px;height:16px;background:#d6dbe9;"></div>
<svg style="left:1187px;top:155px" width="14" height="14" viewBox="0 0 14 14"><path d="M7 0 L3.5 3.5 H10.5 Z M7 14 L3.5 10.5 H10.5 Z" fill="#333"/><path d="M0 5.5 H14 M0 8.5 H14 M7 3 V5 M7 9 V11" stroke="#333" stroke-width="1.2"/></svg>
<svg style="left:1189px;top:176px" width="9" height="5" viewBox="0 0 9 5"><path d="M0 5 L4.5 0 L9 5 Z" fill="#9aa0b4"/></svg>
<div class="a" style="left:1185px;top:189px;width:17px;height:2px;background:#0000d0;"></div>
<div class="a" style="left:1190px;top:187px;width:7px;height:185px;background:#c8c8cc;"></div>
<svg style="left:1189px;top:640px" width="9" height="5" viewBox="0 0 9 5"><path d="M0 0 L4.5 5 L9 0 Z" fill="#868ca0"/></svg>
<svg style="left:276px;top:655px" width="5" height="9" viewBox="0 0 5 9"><path d="M5 0 L0 4.5 L5 9 Z" fill="#9aa0b4"/></svg>
<div class="a" style="left:287px;top:656px;width:374px;height:7px;background:#c8c8cc;"></div>
<svg style="left:1174px;top:655px" width="5" height="9" viewBox="0 0 5 9"><path d="M0 0 L5 4.5 L0 9 Z" fill="#868ca0"/></svg>
<div class="a" style="left:335px;top:154px;width:850px;height:17px;background:#d4d4d4;"></div>
<div class="a" style="left:336px;top:155px;width:848px;height:15px;background:#ffffff;"></div>
<div class="ln" style="top:157px">1</div>
<div class="ln" style="top:174px">2</div>
<div class="c" style="top:174px;left:335.20px"><span class="k">IF</span><span class="w">·</span><span class="o">(</span><span class="o">(</span>xDataCount<span class="o">&gt;=</span><span class="n">1</span><span class="o">)</span><span class="w">·</span><span class="o">AND</span><span class="w">·</span><span class="o">(</span>xDataCount<span class="o">&lt;=</span><span class="n">256</span><span class="o">)</span><span class="o">)</span><span class="w">·</span><span class="k">THEN</span></div>
<div class="ln" style="top:191px">3</div>
<div class="c" style="top:191px;left:364.50px">COM_CRC_Data<span class="o">:=</span><span class="n">16#FFFF</span><span class="o">;</span></div>
<div class="ln" style="top:208px">4</div>
<div class="c" style="top:208px;left:364.50px">TempCount<span class="o">:=</span><span class="n">0</span><span class="o">;</span></div>
<div class="ln" style="top:225px">5</div>
<div class="c" style="top:225px;left:364.50px"><span class="k">FOR</span><span class="w">·</span>II<span class="o">:=</span><span class="n">0</span><span class="w">·</span><span class="k">TO</span><span class="w">·</span><span class="o">(</span><span class="f">UINT_TO_INT</span><span class="o">(</span>xDataCount<span class="o">-</span><span class="n">1</span><span class="o">)</span><span class="o">)</span><span class="w">·</span><span class="k">BY</span><span class="w">·</span><span class="n">1</span><span class="w">·</span><span class="k">DO</span></div>
<div class="ln" style="top:242px">6</div>
<div class="c" style="top:242px;left:393.81px">COM_Temp_Data<span class="o">:=</span><span class="o">(</span><span class="f">WORD_TO_UINT</span><span class="o">(</span><span class="o">(</span><span class="f">SHR</span><span class="o">(</span><span class="f">IN</span><span class="w">·</span><span class="o">:=</span><span class="w">·</span><span class="f">UINT_TO_WORD</span><span class="o">(</span>xDataBuf<span class="o">[</span>II<span class="o">]</span><span class="o">)</span><span class="o">,</span><span class="w">·</span><span class="f">N</span><span class="w">·</span><span class="o">:=</span><span class="w">·</span><span class="n">0</span><span class="o">)</span><span class="o">)</span><span class="w">·</span><span class="o">AND</span><span class="w">·</span><span class="n">16#00FF</span><span class="o">)</span><span class="o">)</span><span class="o">;</span></div>
<div class="a" style="left:365px;top:239px;width:1px;height:17px;background:repeating-linear-gradient(#9a9a9a 0 1px,transparent 1px 2px)"></div>
<div class="ln" style="top:259px">7</div>
<div class="c" style="top:259px;left:393.81px">COM_CRC_Data<span class="o">:=</span><span class="o">(</span><span class="f">WORD_TO_UINT</span><span class="o">(</span><span class="o">(</span><span class="f">UINT_TO_WORD</span><span class="o">(</span>COM_CRC_Data<span class="o">)</span><span class="o">)</span><span class="w">·</span><span class="o">XOR</span><span class="w">·</span><span class="o">(</span><span class="f">UINT_TO_WORD</span><span class="o">(</span>COM_Temp_Data<span class="o">)</span><span class="o">)</span><span class="o">)</span><span class="o">)</span><span class="o">;</span></div>
<div class="a" style="left:365px;top:256px;width:1px;height:17px;background:repeating-linear-gradient(#9a9a9a 0 1px,transparent 1px 2px)"></div>
<div class="ln" style="top:276px">8</div>
<div class="c" style="top:276px;left:393.81px"><span class="k">FOR</span><span class="w">·</span>JJ<span class="o">:=</span><span class="n">0</span><span class="w">·</span><span class="k">TO</span><span class="w">·</span><span class="n">7</span><span class="w">·</span><span class="k">BY</span><span class="w">·</span><span class="n">1</span><span class="w">·</span><span class="k">DO</span></div>
<div class="a" style="left:365px;top:273px;width:1px;height:17px;background:repeating-linear-gradient(#9a9a9a 0 1px,transparent 1px 2px)"></div>
<div class="ln" style="top:293px">9</div>
<div class="c" style="top:293px;left:423.11px"><span class="k">IF</span><span class="w">·</span><span class="o">(</span><span class="o">(</span><span class="o">(</span><span class="f">UINT_TO_WORD</span><span class="o">(</span>COM_CRC_Data<span class="o">)</span><span class="o">)</span><span class="w">·</span><span class="o">AND</span><span class="w">·</span><span class="n">16#0001</span><span class="o">)</span><span class="w">·</span><span class="o">=</span><span class="w">·</span><span class="n">16#0001</span><span class="w">·</span><span class="o">)</span><span class="w">·</span><span class="k">THEN</span></div>
<div class="a" style="left:365px;top:290px;width:1px;height:17px;background:repeating-linear-gradient(#9a9a9a 0 1px,transparent 1px 2px)"></div>
<div class="a" style="left:394px;top:290px;width:1px;height:17px;background:repeating-linear-gradient(#9a9a9a 0 1px,transparent 1px 2px)"></div>
<div class="ln" style="top:310px">10</div>
<div class="c" style="top:310px;left:452.42px">COM_CRC_Data<span class="o">:=</span><span class="o">(</span><span class="f">WORD_TO_UINT</span><span class="o">(</span><span class="f">SHR</span><span class="o">(</span><span class="f">IN</span><span class="w">·</span><span class="o">:=</span><span class="w">·</span><span class="f">UINT_TO_WORD</span><span class="o">(</span>COM_CRC_Data<span class="o">)</span><span class="o">,</span><span class="w">·</span><span class="f">N</span><span class="w">·</span><span class="o">:=</span><span class="w">·</span><span class="n">1</span><span class="o">)</span><span class="o">)</span><span class="o">)</span><span class="o">;</span></div>
<div class="a" style="left:365px;top:307px;width:1px;height:17px;background:repeating-linear-gradient(#9a9a9a 0 1px,transparent 1px 2px)"></div>
<div class="a" style="left:394px;top:307px;width:1px;height:17px;background:repeating-linear-gradient(#9a9a9a 0 1px,transparent 1px 2px)"></div>
<div class="a" style="left:423px;top:307px;width:1px;height:17px;background:repeating-linear-gradient(#9a9a9a 0 1px,transparent 1px 2px)"></div>
<div class="ln" style="top:327px">11</div>
<div class="c" style="top:327px;left:452.42px">COM_CRC_Data<span class="o">:=</span><span class="o">(</span><span class="f">WORD_TO_UINT</span><span class="o">(</span><span class="o">(</span><span class="f">UINT_TO_WORD</span><span class="o">(</span>COM_CRC_Data<span class="o">)</span><span class="o">)</span><span class="w">·</span><span class="o">XOR</span><span class="w">·</span><span class="n">16#A001</span><span class="o">)</span><span class="o">)</span><span class="o">;</span></div>
<div class="a" style="left:365px;top:324px;width:1px;height:17px;background:repeating-linear-gradient(#9a9a9a 0 1px,transparent 1px 2px)"></div>
<div class="a" style="left:394px;top:324px;width:1px;height:17px;background:repeating-linear-gradient(#9a9a9a 0 1px,transparent 1px 2px)"></div>
<div class="a" style="left:423px;top:324px;width:1px;height:17px;background:repeating-linear-gradient(#9a9a9a 0 1px,transparent 1px 2px)"></div>
<div class="ln" style="top:344px">12</div>
<div class="c" style="top:344px;left:423.11px"><span class="k">ELSE</span></div>
<div class="a" style="left:365px;top:341px;width:1px;height:17px;background:repeating-linear-gradient(#9a9a9a 0 1px,transparent 1px 2px)"></div>
<div class="a" style="left:394px;top:341px;width:1px;height:17px;background:repeating-linear-gradient(#9a9a9a 0 1px,transparent 1px 2px)"></div>
<div class="ln" style="top:361px">13</div>
<div class="c" style="top:361px;left:452.42px">COM_CRC_Data<span class="o">:=</span><span class="o">(</span><span class="f">WORD_TO_UINT</span><span class="o">(</span><span class="f">SHR</span><span class="o">(</span><span class="f">IN</span><span class="w">·</span><span class="o">:=</span><span class="w">·</span><span class="f">UINT_TO_WORD</span><span class="o">(</span>COM_CRC_Data<span class="o">)</span><span class="o">,</span><span class="w">·</span><span class="f">N</span><span class="w">·</span><span class="o">:=</span><span class="w">·</span><span class="n">1</span><span class="o">)</span><span class="o">)</span><span class="o">)</span><span class="o">;</span></div>
<div class="a" style="left:365px;top:358px;width:1px;height:17px;background:repeating-linear-gradient(#9a9a9a 0 1px,transparent 1px 2px)"></div>
<div class="a" style="left:394px;top:358px;width:1px;height:17px;background:repeating-linear-gradient(#9a9a9a 0 1px,transparent 1px 2px)"></div>
<div class="a" style="left:423px;top:358px;width:1px;height:17px;background:repeating-linear-gradient(#9a9a9a 0 1px,transparent 1px 2px)"></div>
<div class="ln" style="top:378px">14</div>
<div class="c" style="top:378px;left:423.11px"><span class="k">END_IF</span><span class="o">;</span></div>
<div class="a" style="left:365px;top:375px;width:1px;height:17px;background:repeating-linear-gradient(#9a9a9a 0 1px,transparent 1px 2px)"></div>
<div class="a" style="left:394px;top:375px;width:1px;height:17px;background:repeating-linear-gradient(#9a9a9a 0 1px,transparent 1px 2px)"></div>
<div class="ln" style="top:395px">15</div>
<div class="c" style="top:395px;left:393.81px"><span class="k">END_FOR</span><span class="o">;</span></div>
<div class="a" style="left:365px;top:392px;width:1px;height:17px;background:repeating-linear-gradient(#9a9a9a 0 1px,transparent 1px 2px)"></div>
<div class="ln" style="top:412px">16</div>
<div class="c" style="top:412px;left:393.81px">TempCount<span class="o">:=</span><span class="o">(</span>TempCount<span class="w">·</span><span class="o">+</span><span class="w">·</span><span class="n">1</span><span class="o">)</span><span class="o">;</span></div>
<div class="a" style="left:365px;top:409px;width:1px;height:17px;background:repeating-linear-gradient(#9a9a9a 0 1px,transparent 1px 2px)"></div>
<div class="ln" style="top:429px">17</div>
<div class="c" style="top:429px;left:393.81px"><span class="k">IF</span><span class="w">·</span><span class="o">(</span>TempCount<span class="w">·</span><span class="o">&gt;=</span><span class="w">·</span>xDataCount<span class="o">)</span><span class="w">·</span><span class="k">THEN</span></div>
<div class="a" style="left:365px;top:426px;width:1px;height:17px;background:repeating-linear-gradient(#9a9a9a 0 1px,transparent 1px 2px)"></div>
<div class="ln" style="top:446px">18</div>
<div class="c" style="top:446px;left:423.11px"><span class="k">EXIT</span><span class="o">;</span></div>
<div class="a" style="left:365px;top:443px;width:1px;height:17px;background:repeating-linear-gradient(#9a9a9a 0 1px,transparent 1px 2px)"></div>
<div class="a" style="left:394px;top:443px;width:1px;height:17px;background:repeating-linear-gradient(#9a9a9a 0 1px,transparent 1px 2px)"></div>
<div class="ln" style="top:463px">19</div>
<div class="c" style="top:463px;left:393.81px"><span class="k">END_IF</span><span class="o">;</span></div>
<div class="a" style="left:365px;top:460px;width:1px;height:17px;background:repeating-linear-gradient(#9a9a9a 0 1px,transparent 1px 2px)"></div>
<div class="ln" style="top:480px">20</div>
<div class="a" style="left:365px;top:477px;width:1px;height:17px;background:repeating-linear-gradient(#9a9a9a 0 1px,transparent 1px 2px)"></div>
<div class="ln" style="top:497px">21</div>
<div class="c" style="top:497px;left:393.81px">COM_Temp_Data<span class="o">:=</span><span class="o">(</span><span class="f">WORD_TO_UINT</span><span class="o">(</span><span class="o">(</span><span class="f">SHR</span><span class="o">(</span><span class="f">IN</span><span class="w">·</span><span class="o">:=</span><span class="w">·</span><span class="f">UINT_TO_WORD</span><span class="o">(</span>xDataBuf<span class="o">[</span>II<span class="o">]</span><span class="o">)</span><span class="o">,</span><span class="w">·</span><span class="f">N</span><span class="w">·</span><span class="o">:=</span><span class="w">·</span><span class="n">8</span><span class="o">)</span><span class="o">)</span><span class="w">·</span><span class="o">AND</span><span class="w">·</span><span class="n">16#00FF</span><span class="o">)</span><span class="o">)</span><span class="o">;</span></div>
<div class="a" style="left:365px;top:494px;width:1px;height:17px;background:repeating-linear-gradient(#9a9a9a 0 1px,transparent 1px 2px)"></div>
<div class="ln" style="top:514px">22</div>
<div class="c" style="top:514px;left:393.81px">COM_CRC_Data<span class="o">:=</span><span class="o">(</span><span class="f">WORD_TO_UINT</span><span class="o">(</span><span class="o">(</span><span class="f">UINT_TO_WORD</span><span class="o">(</span>COM_CRC_Data<span class="o">)</span><span class="o">)</span><span class="w">·</span><span class="o">XOR</span><span class="w">·</span><span class="o">(</span><span class="f">UINT_TO_WORD</span><span class="o">(</span>COM_Temp_Data<span class="o">)</span><span class="o">)</span><span class="o">)</span><span class="o">)</span><span class="o">;</span></div>
<div class="a" style="left:365px;top:511px;width:1px;height:17px;background:repeating-linear-gradient(#9a9a9a 0 1px,transparent 1px 2px)"></div>
<div class="ln" style="top:531px">23</div>
<div class="c" style="top:531px;left:393.81px"><span class="k">FOR</span><span class="w">·</span>JJ<span class="o">:=</span><span class="n">0</span><span class="w">·</span><span class="k">TO</span><span class="w">·</span><span class="n">7</span><span class="w">·</span><span class="k">BY</span><span class="w">·</span><span class="n">1</span><span class="w">·</span><span class="k">DO</span></div>
<div class="a" style="left:365px;top:528px;width:1px;height:17px;background:repeating-linear-gradient(#9a9a9a 0 1px,transparent 1px 2px)"></div>
<div class="ln" style="top:548px">24</div>
<div class="c" style="top:548px;left:423.11px"><span class="k">IF</span><span class="w">·</span><span class="o">(</span><span class="o">(</span><span class="o">(</span><span class="f">UINT_TO_WORD</span><span class="o">(</span>COM_CRC_Data<span class="o">)</span><span class="o">)</span><span class="w">·</span><span class="o">AND</span><span class="w">·</span><span class="n">16#0001</span><span class="o">)</span><span class="w">·</span><span class="o">=</span><span class="w">·</span><span class="n">16#0001</span><span class="w">·</span><span class="o">)</span><span class="w">·</span><span class="k">THEN</span></div>
<div class="a" style="left:365px;top:545px;width:1px;height:17px;background:repeating-linear-gradient(#9a9a9a 0 1px,transparent 1px 2px)"></div>
<div class="a" style="left:394px;top:545px;width:1px;height:17px;background:repeating-linear-gradient(#9a9a9a 0 1px,transparent 1px 2px)"></div>
<div class="ln" style="top:565px">25</div>
<div class="c" style="top:565px;left:452.42px">COM_CRC_Data<span class="o">:=</span><span class="o">(</span><span class="f">WORD_TO_UINT</span><span class="o">(</span><span class="f">SHR</span><span class="o">(</span><span class="f">IN</span><span class="w">·</span><span class="o">:=</span><span class="w">·</span><span class="f">UINT_TO_WORD</span><span class="o">(</span>COM_CRC_Data<span class="o">)</span><span class="o">,</span><span class="w">·</span><span class="f">N</span><span class="w">·</span><span class="o">:=</span><span class="w">·</span><span class="n">1</span><span class="o">)</span><span class="o">)</span><span class="o">)</span><span class="o">;</span></div>
<div class="a" style="left:365px;top:562px;width:1px;height:17px;background:repeating-linear-gradient(#9a9a9a 0 1px,transparent 1px 2px)"></div>
<div class="a" style="left:394px;top:562px;width:1px;height:17px;background:repeating-linear-gradient(#9a9a9a 0 1px,transparent 1px 2px)"></div>
<div class="a" style="left:423px;top:562px;width:1px;height:17px;background:repeating-linear-gradient(#9a9a9a 0 1px,transparent 1px 2px)"></div>
<div class="ln" style="top:582px">26</div>
<div class="c" style="top:582px;left:452.42px">COM_CRC_Data<span class="o">:=</span><span class="o">(</span><span class="f">WORD_TO_UINT</span><span class="o">(</span><span class="o">(</span><span class="f">UINT_TO_WORD</span><span class="o">(</span>COM_CRC_Data<span class="o">)</span><span class="o">)</span><span class="w">·</span><span class="o">XOR</span><span class="w">·</span><span class="n">16#A001</span><span class="o">)</span><span class="o">)</span><span class="o">;</span></div>
<div class="a" style="left:365px;top:579px;width:1px;height:17px;background:repeating-linear-gradient(#9a9a9a 0 1px,transparent 1px 2px)"></div>
<div class="a" style="left:394px;top:579px;width:1px;height:17px;background:repeating-linear-gradient(#9a9a9a 0 1px,transparent 1px 2px)"></div>
<div class="a" style="left:423px;top:579px;width:1px;height:17px;background:repeating-linear-gradient(#9a9a9a 0 1px,transparent 1px 2px)"></div>
<div class="ln" style="top:599px">27</div>
<div class="c" style="top:599px;left:423.11px"><span class="k">ELSE</span></div>
<div class="a" style="left:365px;top:596px;width:1px;height:17px;background:repeating-linear-gradient(#9a9a9a 0 1px,transparent 1px 2px)"></div>
<div class="a" style="left:394px;top:596px;width:1px;height:17px;background:repeating-linear-gradient(#9a9a9a 0 1px,transparent 1px 2px)"></div>
<div class="ln" style="top:616px">28</div>
<div class="c" style="top:616px;left:452.42px">COM_CRC_Data<span class="o">:=</span><span class="o">(</span><span class="f">WORD_TO_UINT</span><span class="o">(</span><span class="f">SHR</span><span class="o">(</span><span class="f">IN</span><span class="w">·</span><span class="o">:=</span><span class="w">·</span><span class="f">UINT_TO_WORD</span><span class="o">(</span>COM_CRC_Data<span class="o">)</span><span class="o">,</span><span class="w">·</span><span class="f">N</span><span class="w">·</span><span class="o">:=</span><span class="w">·</span><span class="n">1</span><span class="o">)</span><span class="o">)</span><span class="o">)</span><span class="o">;</span></div>
<div class="a" style="left:365px;top:613px;width:1px;height:17px;background:repeating-linear-gradient(#9a9a9a 0 1px,transparent 1px 2px)"></div>
<div class="a" style="left:394px;top:613px;width:1px;height:17px;background:repeating-linear-gradient(#9a9a9a 0 1px,transparent 1px 2px)"></div>
<div class="a" style="left:423px;top:613px;width:1px;height:17px;background:repeating-linear-gradient(#9a9a9a 0 1px,transparent 1px 2px)"></div>
<div class="ln" style="top:633px">29</div>
<div class="c" style="top:633px;left:423.11px"><span class="k">END_IF</span><span class="o">;</span></div>
<div class="a" style="left:365px;top:630px;width:1px;height:17px;background:repeating-linear-gradient(#9a9a9a 0 1px,transparent 1px 2px)"></div>
<div class="a" style="left:394px;top:630px;width:1px;height:17px;background:repeating-linear-gradient(#9a9a9a 0 1px,transparent 1px 2px)"></div>
<svg style="left:0;top:0" width="1360" height="726"><g stroke="#b0b0b0" stroke-width="1" fill="none"><path d="M338.0 196.5 H362.0 M357.5 192.5 L362.0 196.5 L357.5 200.5"/><path d="M338.0 213.5 H362.0 M357.5 209.5 L362.0 213.5 L357.5 217.5"/><path d="M338.0 230.5 H362.0 M357.5 226.5 L362.0 230.5 L357.5 234.5"/><path d="M338.0 247.5 H362.0 M357.5 243.5 L362.0 247.5 L357.5 251.5"/><path d="M367.3 247.5 H391.3 M386.8 243.5 L391.3 247.5 L386.8 251.5"/><path d="M338.0 264.5 H362.0 M357.5 260.5 L362.0 264.5 L357.5 268.5"/><path d="M367.3 264.5 H391.3 M386.8 260.5 L391.3 264.5 L386.8 268.5"/><path d="M338.0 281.5 H362.0 M357.5 277.5 L362.0 281.5 L357.5 285.5"/><path d="M367.3 281.5 H391.3 M386.8 277.5 L391.3 281.5 L386.8 285.5"/><path d="M338.0 298.5 H362.0 M357.5 294.5 L362.0 298.5 L357.5 302.5"/><path d="M367.3 298.5 H391.3 M386.8 294.5 L391.3 298.5 L386.8 302.5"/><path d="M396.6 298.5 H420.6 M416.1 294.5 L420.6 298.5 L416.1 302.5"/><path d="M338.0 315.5 H362.0 M357.5 311.5 L362.0 315.5 L357.5 319.5"/><path d="M367.3 315.5 H391.3 M386.8 311.5 L391.3 315.5 L386.8 319.5"/><path d="M396.6 315.5 H420.6 M416.1 311.5 L420.6 315.5 L416.1 319.5"/><path d="M425.9 315.5 H449.9 M445.4 311.5 L449.9 315.5 L445.4 319.5"/><path d="M338.0 332.5 H362.0 M357.5 328.5 L362.0 332.5 L357.5 336.5"/><path d="M367.3 332.5 H391.3 M386.8 328.5 L391.3 332.5 L386.8 336.5"/><path d="M396.6 332.5 H420.6 M416.1 328.5 L420.6 332.5 L416.1 336.5"/><path d="M425.9 332.5 H449.9 M445.4 328.5 L449.9 332.5 L445.4 336.5"/><path d="M338.0 349.5 H362.0 M357.5 345.5 L362.0 349.5 L357.5 353.5"/><path d="M367.3 349.5 H391.3 M386.8 345.5 L391.3 349.5 L386.8 353.5"/><path d="M396.6 349.5 H420.6 M416.1 345.5 L420.6 349.5 L416.1 353.5"/><path d="M338.0 366.5 H362.0 M357.5 362.5 L362.0 366.5 L357.5 370.5"/><path d="M367.3 366.5 H391.3 M386.8 362.5 L391.3 366.5 L386.8 370.5"/><path d="M396.6 366.5 H420.6 M416.1 362.5 L420.6 366.5 L416.1 370.5"/><path d="M425.9 366.5 H449.9 M445.4 362.5 L449.9 366.5 L445.4 370.5"/><path d="M338.0 383.5 H362.0 M357.5 379.5 L362.0 383.5 L357.5 387.5"/><path d="M367.3 383.5 H391.3 M386.8 379.5 L391.3 383.5 L386.8 387.5"/><path d="M396.6 383.5 H420.6 M416.1 379.5 L420.6 383.5 L416.1 387.5"/><path d="M338.0 400.5 H362.0 M357.5 396.5 L362.0 400.5 L357.5 404.5"/><path d="M367.3 400.5 H391.3 M386.8 396.5 L391.3 400.5 L386.8 404.5"/><path d="M338.0 417.5 H362.0 M357.5 413.5 L362.0 417.5 L357.5 421.5"/><path d="M367.3 417.5 H391.3 M386.8 413.5 L391.3 417.5 L386.8 421.5"/><path d="M338.0 434.5 H362.0 M357.5 430.5 L362.0 434.5 L357.5 438.5"/><path d="M367.3 434.5 H391.3 M386.8 430.5 L391.3 434.5 L386.8 438.5"/><path d="M338.0 451.5 H362.0 M357.5 447.5 L362.0 451.5 L357.5 455.5"/><path d="M367.3 451.5 H391.3 M386.8 447.5 L391.3 451.5 L386.8 455.5"/><path d="M396.6 451.5 H420.6 M416.1 447.5 L420.6 451.5 L416.1 455.5"/><path d="M338.0 468.5 H362.0 M357.5 464.5 L362.0 468.5 L357.5 472.5"/><path d="M367.3 468.5 H391.3 M386.8 464.5 L391.3 468.5 L386.8 472.5"/><path d="M338.0 485.5 H362.0 M357.5 481.5 L362.0 485.5 L357.5 489.5"/><path d="M367.3 485.5 H391.3 M386.8 481.5 L391.3 485.5 L386.8 489.5"/><path d="M338.0 502.5 H362.0 M357.5 498.5 L362.0 502.5 L357.5 506.5"/><path d="M367.3 502.5 H391.3 M386.8 498.5 L391.3 502.5 L386.8 506.5"/><path d="M338.0 519.5 H362.0 M357.5 515.5 L362.0 519.5 L357.5 523.5"/><path d="M367.3 519.5 H391.3 M386.8 515.5 L391.3 519.5 L386.8 523.5"/><path d="M338.0 536.5 H362.0 M357.5 532.5 L362.0 536.5 L357.5 540.5"/><path d="M367.3 536.5 H391.3 M386.8 532.5 L391.3 536.5 L386.8 540.5"/><path d="M338.0 553.5 H362.0 M357.5 549.5 L362.0 553.5 L357.5 557.5"/><path d="M367.3 553.5 H391.3 M386.8 549.5 L391.3 553.5 L386.8 557.5"/><path d="M396.6 553.5 H420.6 M416.1 549.5 L420.6 553.5 L416.1 557.5"/><path d="M338.0 570.5 H362.0 M357.5 566.5 L362.0 570.5 L357.5 574.5"/><path d="M367.3 570.5 H391.3 M386.8 566.5 L391.3 570.5 L386.8 574.5"/><path d="M396.6 570.5 H420.6 M416.1 566.5 L420.6 570.5 L416.1 574.5"/><path d="M425.9 570.5 H449.9 M445.4 566.5 L449.9 570.5 L445.4 574.5"/><path d="M338.0 587.5 H362.0 M357.5 583.5 L362.0 587.5 L357.5 591.5"/><path d="M367.3 587.5 H391.3 M386.8 583.5 L391.3 587.5 L386.8 591.5"/><path d="M396.6 587.5 H420.6 M416.1 583.5 L420.6 587.5 L416.1 591.5"/><path d="M425.9 587.5 H449.9 M445.4 583.5 L449.9 587.5 L445.4 591.5"/><path d="M338.0 604.5 H362.0 M357.5 600.5 L362.0 604.5 L357.5 608.5"/><path d="M367.3 604.5 H391.3 M386.8 600.5 L391.3 604.5 L386.8 608.5"/><path d="M396.6 604.5 H420.6 M416.1 600.5 L420.6 604.5 L416.1 608.5"/><path d="M338.0 621.5 H362.0 M357.5 617.5 L362.0 621.5 L357.5 625.5"/><path d="M367.3 621.5 H391.3 M386.8 617.5 L391.3 621.5 L386.8 625.5"/><path d="M396.6 621.5 H420.6 M416.1 617.5 L420.6 621.5 L416.1 625.5"/><path d="M425.9 621.5 H449.9 M445.4 617.5 L449.9 621.5 L445.4 625.5"/><path d="M338.0 638.5 H362.0 M357.5 634.5 L362.0 638.5 L357.5 642.5"/><path d="M367.3 638.5 H391.3 M386.8 634.5 L391.3 638.5 L386.8 642.5"/><path d="M396.6 638.5 H420.6 M416.1 634.5 L420.6 638.5 L416.1 642.5"/></g></svg>
<div class="a" style="left:326px;top:186px;width:1px;height:465px;background:#8c8c8c;"></div>
<div class="a" style="left:320px;top:173px;width:13px;height:13px;border:1px solid #8c8c8c;background:#f0f0f0"></div>
<div class="a" style="left:322px;top:179px;width:9px;height:1px;background:#8c8c8c;"></div>
<div class="a" style="left:320px;top:224px;width:13px;height:13px;border:1px solid #8c8c8c;background:#f0f0f0"></div>
<div class="a" style="left:322px;top:230px;width:9px;height:1px;background:#8c8c8c;"></div>
<div class="a" style="left:320px;top:275px;width:13px;height:13px;border:1px solid #8c8c8c;background:#f0f0f0"></div>
<div class="a" style="left:322px;top:281px;width:9px;height:1px;background:#8c8c8c;"></div>
<div class="a" style="left:320px;top:292px;width:13px;height:13px;border:1px solid #8c8c8c;background:#f0f0f0"></div>
<div class="a" style="left:322px;top:298px;width:9px;height:1px;background:#8c8c8c;"></div>
<div class="a" style="left:320px;top:428px;width:13px;height:13px;border:1px solid #8c8c8c;background:#f0f0f0"></div>
<div class="a" style="left:322px;top:434px;width:9px;height:1px;background:#8c8c8c;"></div>
<div class="a" style="left:320px;top:530px;width:13px;height:13px;border:1px solid #8c8c8c;background:#f0f0f0"></div>
<div class="a" style="left:322px;top:536px;width:9px;height:1px;background:#8c8c8c;"></div>
<div class="a" style="left:320px;top:547px;width:13px;height:13px;border:1px solid #8c8c8c;background:#f0f0f0"></div>
<div class="a" style="left:322px;top:553px;width:9px;height:1px;background:#8c8c8c;"></div>
<svg style="left:326px;top:380px" width="8" height="8"><path d="M0.5 0 Q1 3.5 3.5 4 H7" stroke="#8c8c8c" stroke-width="1" fill="none"/></svg>
<svg style="left:326px;top:397px" width="8" height="8"><path d="M0.5 0 Q1 3.5 3.5 4 H7" stroke="#8c8c8c" stroke-width="1" fill="none"/></svg>
<svg style="left:326px;top:482px" width="8" height="8"><path d="M0.5 0 Q1 3.5 3.5 4 H7" stroke="#8c8c8c" stroke-width="1" fill="none"/></svg>
<svg style="left:326px;top:635px" width="8" height="8"><path d="M0.5 0 Q1 3.5 3.5 4 H7" stroke="#8c8c8c" stroke-width="1" fill="none"/></svg>
<div class="a" style="left:1208px;top:85px;width:146px;height:585px;background:#8f9dbb;"></div>
<div class="a" style="left:1209px;top:86px;width:144px;height:21px;background:#4d6082;"></div>
<div class="t" style="left:1213px;top:90px;color:#fff;transform:scaleX(0.9913);">进入数据监控1</div>
<svg style="left:1305px;top:94px" width="8" height="5" viewBox="0 0 8 5"><path d="M0 0 H8 L4 4 Z" fill="#fff"/></svg>
<svg style="left:1321px;top:90px" width="9" height="12" viewBox="0 0 9 12"><path d="M2.75 0.75 H6.25 V6.5 H2.75 Z" fill="none" stroke="#fff" stroke-width="1.5"/><path d="M0.5 6.25 H8.5" stroke="#fff" stroke-width="1.5"/><path d="M4.5 7 V12" stroke="#fff" stroke-width="1.2"/></svg>
<svg style="left:1336px;top:92px" width="9" height="9" viewBox="0 0 9 9"><path d="M0.5 0.5 L8.5 8.5 M8.5 0.5 L0.5 8.5" stroke="#fff" stroke-width="1"/></svg>
<div class="a" style="left:1209px;top:107px;width:144px;height:82px;background:#d5dae8;"></div>
<svg style="left:1213px;top:112px" width="16" height="16" viewBox="0 0 16 16"><rect x="0" y="0" width="3" height="3" fill="none" stroke="#333" stroke-width="0.8"/><rect x="0" y="12" width="3" height="3" fill="#333"/><path d="M1.5 3 V6.5 H3 M1.5 12 V8.5 H3" stroke="#333" stroke-width="0.8" fill="none"/><path d="M3.5 7.5 H10 M6.5 4.5 L3.5 7.5 L6.5 10.5" stroke="#0a4ea0" stroke-width="1.8" fill="none"/><rect x="11.5" y="6" width="4" height="3" fill="none" stroke="#333" stroke-width="0.8"/></svg>
<svg style="left:1236px;top:112px" width="16" height="16" viewBox="0 0 16 16"><rect x="0" y="0" width="3" height="3" fill="#333"/><rect x="0" y="12" width="3" height="3" fill="none" stroke="#333" stroke-width="0.8"/><path d="M1.5 3 V6.5 H3 M1.5 12 V8.5 H3" stroke="#333" stroke-width="0.8" fill="none"/><path d="M3.5 7.5 H10 M6.5 4.5 L3.5 7.5 L6.5 10.5" stroke="#0a4ea0" stroke-width="1.8" fill="none"/><rect x="11.5" y="6" width="4" height="3" fill="none" stroke="#333" stroke-width="0.8"/></svg>
<svg style="left:1258px;top:112px" width="15" height="15" viewBox="0 0 15 15"><path d="M1 1 L14 14 M14 1 L1 14" stroke="#7a7a7a" stroke-width="2"/></svg>
<div class="a" style="left:1279px;top:111px;width:1px;height:19px;background:#6e7e98;"></div>
<svg style="left:1286px;top:112px" width="16" height="16" viewBox="0 0 16 16"><rect x="1" y="8" width="5" height="6" fill="#7a7a7a"/><path d="M4 5 V11 H9" stroke="#1a90d8" stroke-width="2.2" fill="none"/><rect x="9" y="1" width="6" height="6" fill="#ffa000"/></svg>
<div class="a" style="left:1211px;top:133px;width:140px;height:1px;background:#8a98b0;"></div>
<div class="t" style="left:1215px;top:144px;font-family:'Liberation Mono',monospace;font-size:9px;font-weight:bold;color:#111;transform:scaleX(0.5552);">ASCII</div>
<div class="t" style="left:1237px;top:144px;font-family:'Liberation Mono',monospace;font-size:9px;font-weight:bold;color:#111;transform:scaleX(0.9257);">DEC</div>
<div class="t" style="left:1259px;top:144px;font-family:'Liberation Mono',monospace;font-size:9px;font-weight:bold;color:#111;transform:scaleX(0.9257);">BIN</div>
<div class="t" style="left:1280px;top:144px;font-family:'Liberation Mono',monospace;font-size:9px;font-weight:bold;color:#111;transform:scaleX(0.9875);">HEX</div>
<div class="t" style="left:1303px;top:144px;font-family:'Liberation Mono',monospace;font-size:9px;font-weight:bold;color:#111;transform:scaleX(0.8640);">DFT</div>
<div class="a" style="left:1211px;top:161px;width:140px;height:1px;background:#8a98b0;"></div>
<svg style="left:1215px;top:168px" width="15" height="14" viewBox="0 0 15 14"><path d="M1 13 L3 9 L10 2 L13 5 L6 12 Z" fill="#333"/><path d="M10 2 L12 0 L15 3 L13 5 Z" fill="#333"/></svg>
<svg style="left:1236px;top:168px" width="15" height="15" viewBox="0 0 15 15"><g fill="#333"><circle cx="7.5" cy="7.5" r="5"/><rect x="6" y="0" width="3" height="15"/><rect x="0" y="6" width="15" height="3"/><rect x="6" y="0" width="3" height="15" transform="rotate(45 7.5 7.5)"/><rect x="6" y="0" width="3" height="15" transform="rotate(-45 7.5 7.5)"/></g><circle cx="7.5" cy="7.5" r="2" fill="#d5dae8"/></svg>
<div class="a" style="left:1209px;top:189px;width:144px;height:25px;background:#8f9dbb;"></div>
<div class="a" style="left:1210px;top:190px;width:142px;height:23px;background:#ffffff;"></div>
<div class="t" style="left:1212px;top:196px;color:#a8a8a8;transform:scaleX(1.0325);">过滤: (Ctrl+F)</div>
<div class="a" style="left:1338px;top:191px;width:13px;height:21px;background:#f8f8f8;"></div>
<svg style="left:1342px;top:199px" width="6" height="4" viewBox="0 0 6 4"><path d="M0 0 H6 L3 3.5 Z" fill="#333"/></svg>
<div class="a" style="left:1209px;top:214px;width:144px;height:24px;background:#4d6082;"></div>
<div class="a" style="left:1233px;top:217px;width:1px;height:19px;background:#2a3a58;"></div>
<div class="t" style="left:1293px;top:219px;color:#fff;">标识符</div>
<div class="a" style="left:1209px;top:238px;width:144px;height:415px;background:#ffffff;"></div>
<div class="a" style="left:1234px;top:259px;width:119px;height:1px;background:#e8e8e8;"></div>
<div class="t" style="left:1224px;top:244px;color:#2b91af;font-size:12px;transform:scaleX(0.8972);">1</div>
<div class="a" style="left:0;top:0;width:1353px;height:726px;overflow:hidden;pointer-events:none"><div class="t" style="left:1257px;top:244px;color:#000;font-size:12.5px">MyPOU.DataBuf[</div></div>
<div class="a" style="left:1209px;top:260px;width:144px;height:22px;background:#f0f0f0;"></div>
<div class="a" style="left:1234px;top:281px;width:119px;height:1px;background:#e8e8e8;"></div>
<div class="t" style="left:1224px;top:266px;color:#2b91af;font-size:12px;transform:scaleX(0.8972);">2</div>
<div class="a" style="left:0;top:0;width:1353px;height:726px;overflow:hidden;pointer-events:none"><div class="t" style="left:1257px;top:266px;color:#000;font-size:12.5px">MyPOU.DataBuf[</div></div>
<div class="a" style="left:1234px;top:303px;width:119px;height:1px;background:#e8e8e8;"></div>
<div class="t" style="left:1224px;top:288px;color:#2b91af;font-size:12px;transform:scaleX(0.8972);">3</div>
<div class="a" style="left:0;top:0;width:1353px;height:726px;overflow:hidden;pointer-events:none"><div class="t" style="left:1257px;top:288px;color:#000;font-size:12.5px">MyPOU.DataBuf[</div></div>
<div class="a" style="left:1209px;top:304px;width:144px;height:22px;background:#f0f0f0;"></div>
<div class="a" style="left:1234px;top:325px;width:119px;height:1px;background:#e8e8e8;"></div>
<div class="t" style="left:1224px;top:310px;color:#2b91af;font-size:12px;transform:scaleX(0.8972);">4</div>
<div class="a" style="left:0;top:0;width:1353px;height:726px;overflow:hidden;pointer-events:none"><div class="t" style="left:1257px;top:310px;color:#000;font-size:12.5px">MyPOU.DataBuf[</div></div>
<div class="a" style="left:1234px;top:347px;width:119px;height:1px;background:#e8e8e8;"></div>
<div class="t" style="left:1224px;top:332px;color:#2b91af;font-size:12px;transform:scaleX(0.8972);">5</div>
<div class="a" style="left:1209px;top:238px;width:144px;height:22px;border:1px dotted #222"></div>
<div class="a" style="left:1209px;top:653px;width:144px;height:16px;background:#f0f0f0;"></div>
<svg style="left:1213px;top:656px" width="6" height="9" viewBox="0 0 6 9"><path d="M5 0.8 L1.2 4.5 L5 8.2" stroke="#444" stroke-width="2" fill="none"/></svg>
<div class="a" style="left:1226px;top:653px;width:30px;height:16px;background:#c8c8c8;"></div>
<svg style="left:1342px;top:656px" width="6" height="9" viewBox="0 0 6 9"><path d="M1 0.8 L4.8 4.5 L1 8.2" stroke="#444" stroke-width="2" fill="none"/></svg>
</body></html>
